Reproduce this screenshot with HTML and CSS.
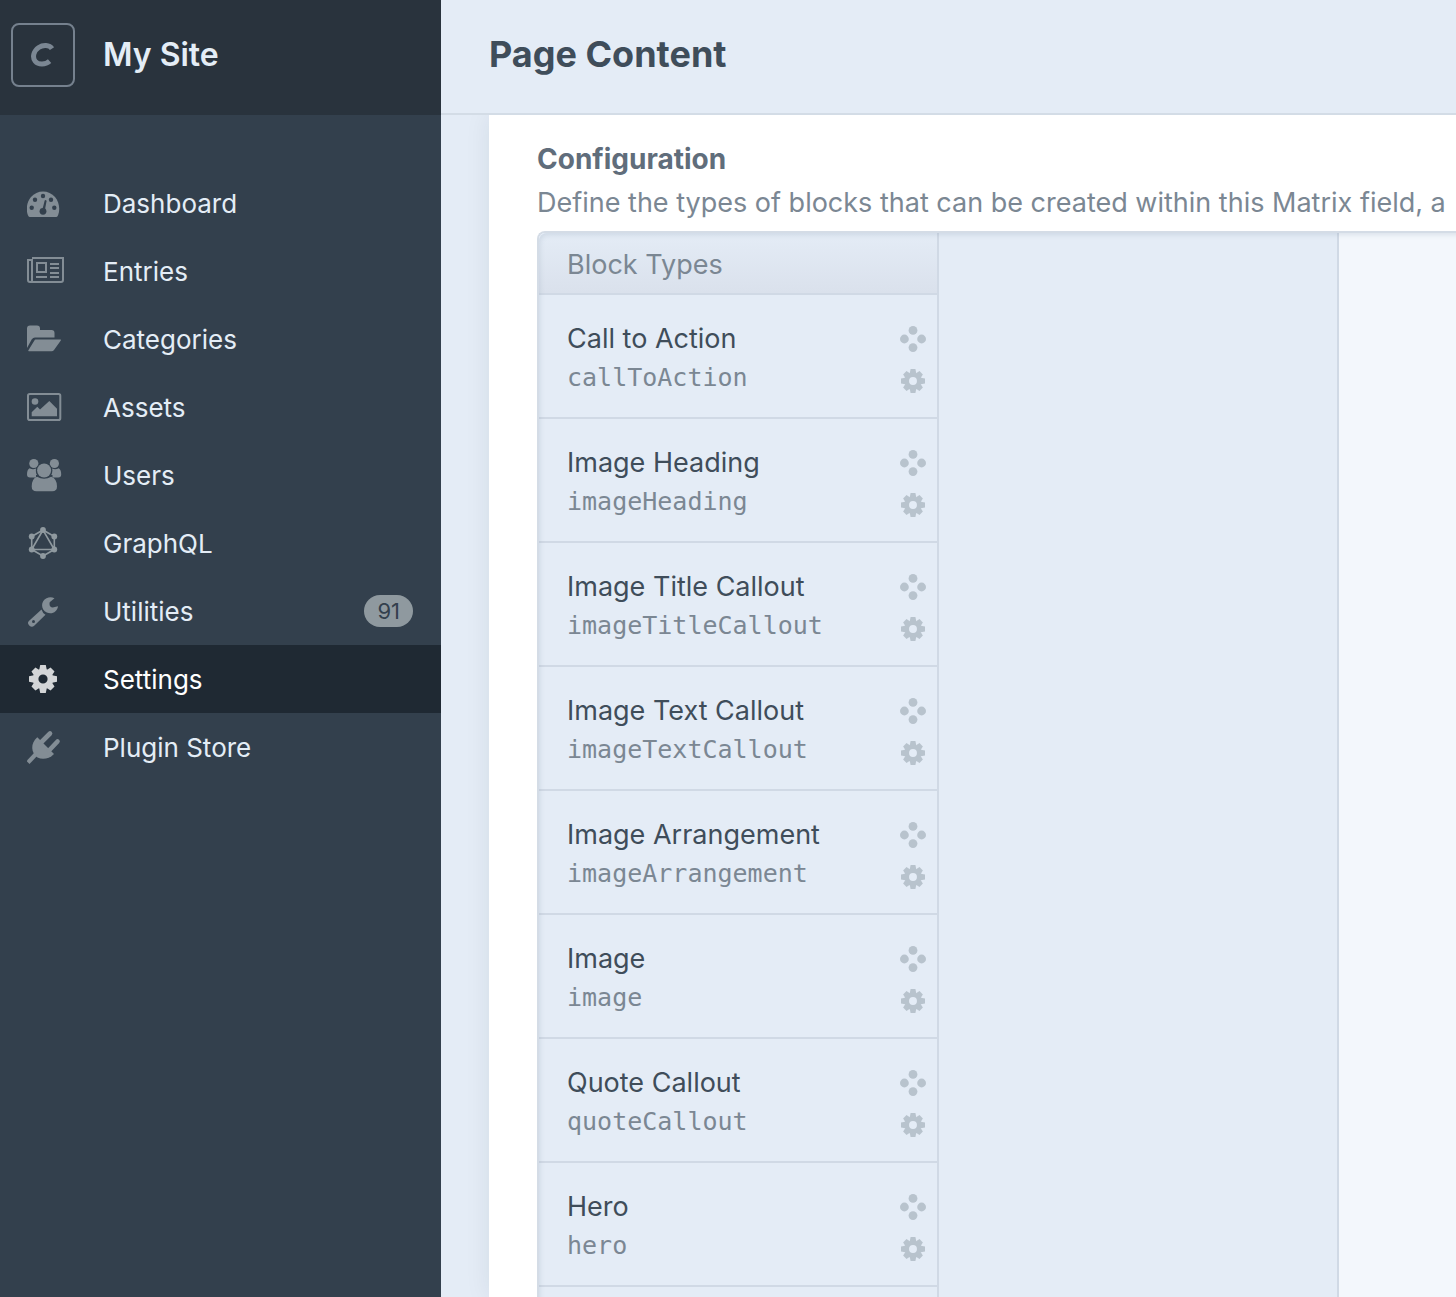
FILE: index.html
```html
<!DOCTYPE html>
<html lang="en">
<head>
<meta charset="utf-8">
<meta name="viewport" content="width=device-width, initial-scale=1">
<title>Page Content - My Site</title>
<link rel="stylesheet" href="styles.css">
</head>
<body>
<svg class="sprite" aria-hidden="true">
  <symbol id="gear" viewBox="-14 -14 28 28">
    <circle r="7.4" fill="none" stroke="currentColor" stroke-width="5.6"/>
    <path fill="currentColor" d="M-3.8-9-2.8-14h5.600L3.8-9zM-3.800 9-2.800 14h5.600L3.800 9zM-9-3.800-14-2.800v5.600L-9 3.800zM9-3.800 14-2.800v5.600L9 3.800z"/>
    <path transform="rotate(45)" fill="currentColor" d="M-3.800-9-2.800-13.500h5.600L3.800-9zM-3.800 9-2.800 13.500h5.600L3.800 9zM-9-3.800-13.500-2.800v5.600L-9 3.800zM9-3.800 13.500-2.800v5.600L9 3.800z"/>
  </symbol>
  <symbol id="move" viewBox="0 0 26 26">
    <g fill="currentColor"><circle cx="13" cy="4.4" r="4.4"/><circle cx="4.4" cy="13" r="4.4"/><circle cx="21.6" cy="13" r="4.4"/><circle cx="13" cy="21.6" r="4.4"/></g>
  </symbol>
</svg>
<div class="app">
  <aside class="sidebar">
    <a class="site" href="#">
      <span class="site-logo">
        <svg width="26" height="24" viewBox="0 0 26 24" aria-hidden="true"><path d="M22 5.600C19.500 1.900 13 1.700 8.700 4.500 4 7.600 1.800 14 5.200 18.200 8.500 22.200 15.500 21.800 19.600 18.200" fill="none" stroke="currentColor" stroke-width="5"/></svg>
      </span>
      <span class="site-name">My Site</span>
    </a>
    <nav class="nav" aria-label="Primary">
      <a class="nav-item" href="#"><svg class="nav-icon" viewBox="0 0 38 36" aria-hidden="true"><path fill="currentColor" d="M2.800 32Q1.800 32 1.300 31C-1.500 25-.3 17 4 12A16 16 0 0 1 28 12C32.300 17 33.500 25 30.700 31Q30.200 32 29.200 32Z"/><g class="cut"><circle cx="4.700" cy="22.700" r="2.200"/><circle cx="8" cy="14.700" r="2.200"/><circle cx="16" cy="11" r="2.200"/><circle cx="24" cy="14.700" r="2.200"/><circle cx="27.300" cy="22.700" r="2.200"/><circle cx="16" cy="26.300" r="3.400"/><path d="m15 26 2.700-10.500q1-1 1.900.4L17.500 27z"/></g></svg><span class="nav-label">Dashboard</span></a>
      <a class="nav-item" href="#"><svg class="nav-icon" viewBox="0 0 38 36" aria-hidden="true"><g fill="none" stroke="currentColor" stroke-width="2"><path d="M5 5H36V27a2 2 0 0 1-2 2H3a2 2 0 0 1-2-2V7H5V26.500A2 2 0 0 1 3 29"/><path d="M10 10h9v9h-9zM23 11h9M23 15h9M23 20h9M23 24h9M9 24h11"/></g></svg><span class="nav-label">Entries</span></a>
      <a class="nav-item" href="#"><svg class="nav-icon" viewBox="0 0 38 36" aria-hidden="true"><path fill="currentColor" d="M0 27V7.500q0-3 3-3h7q3 0 3 3V9h11.500q3 0 3 3v4.500H8q-2 0-3.200 1.700zM8.500 18.500h25q.8 0 .3 1L27 29q-.8 1.200-2.500 1.200H2q-1.300 0-.6-1l6-9.800q.5-.9 1.100-.9z"/></svg><span class="nav-label">Categories</span></a>
      <a class="nav-item" href="#"><svg class="nav-icon" viewBox="0 0 38 36" aria-hidden="true"><rect x="1" y="5" width="32.300" height="26" rx="1.800" fill="none" stroke="currentColor" stroke-width="2"/><circle cx="8" cy="12.500" r="3.300" fill="currentColor"/><path fill="currentColor" d="M4.700 27.300v-4l5.600-5.600L13 20.500l9.300-8.500L30 19.700v7.600z"/></svg><span class="nav-label">Assets</span></a>
      <a class="nav-item" href="#"><svg class="nav-icon" viewBox="0 0 38 36" aria-hidden="true"><g fill="currentColor"><circle cx="6.800" cy="6.500" r="4.600"/><circle cx="27.400" cy="6.500" r="4.600"/><path d="M2.500 11.300Q6 13 9 11.500q-.7 4.500 2 8-1 .9-2.500.9H3q-3 0-3-3 0-4.500 2.500-6.100zM31.700 11.300q-3.500 1.700-6.500.2.700 4.500-2 8 1 .9 2.500.9h5.500q3 0 3-3 0-4.500-2.500-6.100z"/></g><circle class="cut" cx="17.100" cy="13.500" r="8"/><path class="cut" d="M9 18h16.500v6H9z"/><g fill="currentColor"><circle cx="17.100" cy="13.500" r="7"/><path d="M10 19.800q7 4 14.200 0 5.800 2 5.800 9.700 0 4.700-4.700 4.700H9.400q-4.700 0-4.700-4.700 0-7.700 5.300-9.700z"/></g></svg><span class="nav-label">Users</span></a>
      <a class="nav-item" href="#"><svg class="nav-icon nav-icon-light" viewBox="0 0 38 36" aria-hidden="true"><path d="m16 5 11.300 6.500v13L16 31 4.700 24.500v-13zM16 5 4.700 24.500h22.600z" fill="none" stroke="currentColor" stroke-width="1.600"/><g fill="currentColor"><circle cx="16" cy="5" r="2.900"/><circle cx="27.300" cy="11.500" r="2.900"/><circle cx="27.300" cy="24.500" r="2.900"/><circle cx="16" cy="31" r="2.900"/><circle cx="4.700" cy="24.500" r="2.900"/><circle cx="4.700" cy="11.500" r="2.900"/></g></svg><span class="nav-label">GraphQL</span></a>
      <a class="nav-item" href="#"><svg class="nav-icon" viewBox="0 0 38 36" aria-hidden="true"><path fill="currentColor" d="M27.500 5.200 22.700 9.200Q21.700 14 25.800 14.500L31 13.200C30.500 18.500 25 22 19.800 19.500 13.500 16.500 13.600 8 19.500 5.200Q23.500 3.500 27.500 5.200zM14.500 16.500q1 3.500 4 5.200L7.200 32.700q-2.300 2-4.700 0-2.700-2.400-.6-4.700z"/><circle class="cut" cx="6.500" cy="28.600" r="1.500"/></svg><span class="nav-label">Utilities</span><span class="badge">91</span></a>
      <a class="nav-item nav-item-active" href="#" aria-current="page"><svg class="nav-icon" viewBox="0 0 38 36" aria-hidden="true"><use href="#gear" x="2" y="4" width="28" height="28"/></svg><span class="nav-label">Settings</span></a>
      <a class="nav-item" href="#"><svg class="nav-icon" viewBox="0 0 38 36" aria-hidden="true"><path fill="currentColor" d="M10.300 8.200 27 24.900C22 30 15.500 31 10.500 28.500 4 24 3 14.500 10.300 8.200z"/><path d="m14 13.500 9-9M22 21.500l8.500-9" fill="none" stroke="currentColor" stroke-width="4.600" stroke-linecap="round"/><path d="M9 25 1 33.500" stroke="currentColor" stroke-width="4.200"/></svg><span class="nav-label">Plugin Store</span></a>
    </nav>
  </aside>
  <main class="main">
    <header class="page-header"><h1>Page Content</h1></header>
    <section class="pane">
      <h2>Configuration</h2>
      <p class="instructions">Define the types of blocks that can be created within this Matrix field, a</p>
      <div class="matrix">
        <div class="column block-types">
          <h3>Block Types</h3>
          <ul>
            <li><div class="names"><span class="name">Call to Action</span><code>callToAction</code></div><div class="actions"><button type="button" aria-label="Reorder"><svg viewBox="0 0 26 26"><use href="#move"/></svg></button><button type="button" aria-label="Settings"><svg viewBox="0 0 26 26"><use href="#gear" x="1" y="1" width="24" height="24"/></svg></button></div></li>
            <li><div class="names"><span class="name">Image Heading</span><code>imageHeading</code></div><div class="actions"><button type="button" aria-label="Reorder"><svg viewBox="0 0 26 26"><use href="#move"/></svg></button><button type="button" aria-label="Settings"><svg viewBox="0 0 26 26"><use href="#gear" x="1" y="1" width="24" height="24"/></svg></button></div></li>
            <li><div class="names"><span class="name">Image Title Callout</span><code>imageTitleCallout</code></div><div class="actions"><button type="button" aria-label="Reorder"><svg viewBox="0 0 26 26"><use href="#move"/></svg></button><button type="button" aria-label="Settings"><svg viewBox="0 0 26 26"><use href="#gear" x="1" y="1" width="24" height="24"/></svg></button></div></li>
            <li><div class="names"><span class="name">Image Text Callout</span><code>imageTextCallout</code></div><div class="actions"><button type="button" aria-label="Reorder"><svg viewBox="0 0 26 26"><use href="#move"/></svg></button><button type="button" aria-label="Settings"><svg viewBox="0 0 26 26"><use href="#gear" x="1" y="1" width="24" height="24"/></svg></button></div></li>
            <li><div class="names"><span class="name">Image Arrangement</span><code>imageArrangement</code></div><div class="actions"><button type="button" aria-label="Reorder"><svg viewBox="0 0 26 26"><use href="#move"/></svg></button><button type="button" aria-label="Settings"><svg viewBox="0 0 26 26"><use href="#gear" x="1" y="1" width="24" height="24"/></svg></button></div></li>
            <li><div class="names"><span class="name">Image</span><code>image</code></div><div class="actions"><button type="button" aria-label="Reorder"><svg viewBox="0 0 26 26"><use href="#move"/></svg></button><button type="button" aria-label="Settings"><svg viewBox="0 0 26 26"><use href="#gear" x="1" y="1" width="24" height="24"/></svg></button></div></li>
            <li><div class="names"><span class="name">Quote Callout</span><code>quoteCallout</code></div><div class="actions"><button type="button" aria-label="Reorder"><svg viewBox="0 0 26 26"><use href="#move"/></svg></button><button type="button" aria-label="Settings"><svg viewBox="0 0 26 26"><use href="#gear" x="1" y="1" width="24" height="24"/></svg></button></div></li>
            <li><div class="names"><span class="name">Hero</span><code>hero</code></div><div class="actions"><button type="button" aria-label="Reorder"><svg viewBox="0 0 26 26"><use href="#move"/></svg></button><button type="button" aria-label="Settings"><svg viewBox="0 0 26 26"><use href="#gear" x="1" y="1" width="24" height="24"/></svg></button></div></li>
          </ul>
        </div>
        <div class="column"></div>
        <div class="field-settings"></div>
      </div>
    </section>
  </main>
</div>
</body>
</html>
```
FILE: styles.css
```css
* { box-sizing: border-box; }
body {
  margin: 0;
  font-family: Inter, "Liberation Sans", sans-serif;
  font-size: 27px;
  color: #3f4d5a;
  background: #e4ecf6;
}
h1, h2, h3, p, ul { margin: 0; padding: 0; }
ul { list-style: none; }
a { color: inherit; text-decoration: none; }
.sprite { display: none; }

.app { display: flex; height: 100vh; overflow: hidden; }

/* Sidebar */
.sidebar { flex: 0 0 441px; background: #33404d; color: #e4edf6; }
.site {
  display: flex;
  align-items: center;
  gap: 28px;
  height: 115px;
  padding: 0 11px 5px;
  background: #29333d;
}
.site-logo {
  display: flex;
  align-items: center;
  justify-content: center;
  width: 64px;
  height: 64px;
  border: 2px solid #75818e;
  border-radius: 8px;
  color: #7b8793;
}
.site-name { font-size: 32px; font-weight: 600; line-height: 40px; }
.nav { padding-top: 54px; }
.nav-item {
  --nav-bg: #33404d;
  display: flex;
  align-items: center;
  height: 68px;
  padding: 0 28px 0 27px;
  background: var(--nav-bg);
  font-size: 26px;
}
.nav-item-active { --nav-bg: #1f2933; color: #fff; }
.nav-icon { flex: none; width: 38px; height: 36px; margin-right: 38px; color: #838d95; }
.nav-icon-light { color: #8f999f; }
.nav-item-active .nav-icon { color: #d3d5d7; }
.cut { fill: var(--nav-bg); }
.nav-label { flex: 1; }
.badge {
  padding: 0 13px;
  border-radius: 16px;
  background: #8f999f;
  color: #33404d;
  font-size: 22px;
  line-height: 32px;
}

/* Main area */
.main { flex: 1; min-width: 0; display: flex; flex-direction: column; }
.page-header {
  height: 115px;
  padding: 30px 48px 0;
  border-bottom: 2px solid #d3dce6;
}
h1 { font-size: 36px; font-weight: 700; line-height: 48px; }
.pane {
  flex: 1;
  min-height: 0;
  display: flex;
  flex-direction: column;
  margin-left: 48px;
  padding: 24px 0 0 48px;
  background: #fff;
  box-shadow: 0 0 24px rgba(31, 41, 51, 0.08);
  clip-path: inset(0 0 0 -48px);
}
h2 { font-size: 28px; font-weight: 700; line-height: 40px; color: #606d7b; }
.instructions {
  overflow: hidden;
  margin-bottom: 4px;
  color: #7b8793;
  line-height: 48px;
  white-space: nowrap;
}
.matrix {
  flex: 1;
  min-height: 0;
  display: flex;
  overflow: hidden;
  border: solid #d4dce6;
  border-width: 2px 0 0 2px;
  border-radius: 8px 0 0;
  background: #f3f7fc;
  position: relative;
}
.matrix::after {
  content: "";
  position: absolute;
  inset: 0 -16px -16px 0;
  border-radius: 8px 0 0;
  box-shadow: inset 1px 2px 5px rgba(96, 116, 145, 0.16);
  pointer-events: none;
}
.column { flex: 0 0 400px; border-right: 2px solid #d0d9e5; background: #e4ecf6; }
.field-settings { flex: 1; }
h3 {
  height: 62px;
  padding-left: 28px;
  border-bottom: 2px solid #d0d9e5;
  background: linear-gradient(#e4ecf6, #dae1ec);
  color: #7b8793;
  font-size: 27px;
  font-weight: 400;
  line-height: 64px;
}
li {
  display: flex;
  justify-content: space-between;
  height: 124px;
  padding: 24px 11px 0 28px;
  border-bottom: 2px solid #d0d9e5;
}
.names { display: flex; flex-direction: column; }
.name { line-height: 40px; }
code {
  color: #7b8793;
  font-family: "DejaVu Sans Mono", monospace;
  font-size: 25px;
  line-height: 38px;
}
.actions { display: flex; flex-direction: column; gap: 16px; padding-top: 7px; }
.actions button {
  width: 26px;
  height: 26px;
  padding: 0;
  border: 0;
  background: none;
  color: #b8c3cd;
}
.actions svg { display: block; width: 26px; height: 26px; }
```
